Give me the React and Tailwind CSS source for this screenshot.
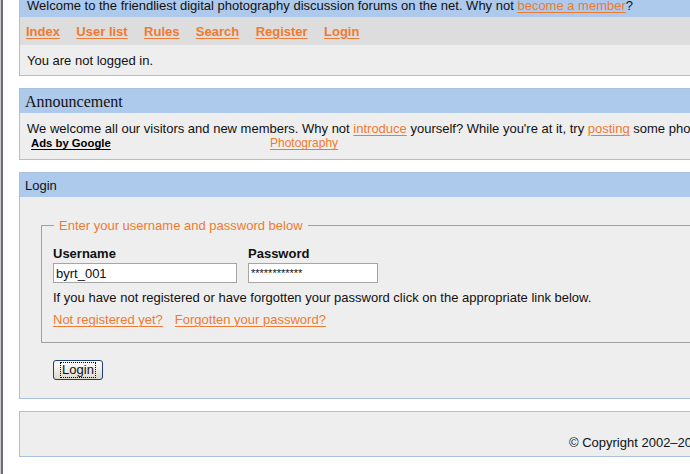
import React from "react";

const link = "text-[#f07a30] underline underline-offset-2 decoration-1";

export default function App() {
  return (
    <div className="flex w-[690px] h-[474px] overflow-hidden bg-white text-[13px] leading-[15px] text-[#111] font-['Liberation_Sans',Arial,sans-serif]">
      <div className="w-[3px] shrink-0 border-l border-[#c9c9c9] bg-[#6d6d78]" />
      <div className="flex flex-col shrink-0 w-[780px] pl-4">
        {/* Top panel */}
        <section className="-mt-2 border border-[#a9c1de]">
          <div className="h-6 bg-[#adc9eb] pl-[7px] flex items-center whitespace-nowrap">
            Welcome to the friendliest digital photography discussion forums on the net. Why not&nbsp;
            <a className={link}>become a member</a>?
          </div>
          <nav className="h-7 bg-[#dddddd] pl-[6px] flex items-center gap-[16.4px] font-bold text-[13px]">
            <a className={link}>Index</a>
            <a className={link}>User list</a>
            <a className={link}>Rules</a>
            <a className={link}>Search</a>
            <a className={link}>Register</a>
            <a className={link}>Login</a>
          </nav>
          <div className="h-[30px] bg-[#eeeeee] pl-[7px] flex items-center">You are not logged in.</div>
        </section>

        {/* Announcement */}
        <section className="mt-3 border border-[#a9c1de]">
          <div className="h-6 bg-[#adc9eb] pl-[5px] flex items-center font-['Liberation_Serif','Times_New_Roman',serif] text-[16px]">
            Announcement
          </div>
          <div className="bg-[#eeeeee] pl-[7px] pt-2 pb-2 whitespace-nowrap">
            <div>
              We welcome all our visitors and new members. Why not <a className={link}>introduce</a> yourself? While
              you're at it, try <a className={link}>posting</a> some photos of your own.
            </div>
            <div className="flex">
              <a className="ml-1 w-[239px] font-bold text-[11.3px] text-black underline underline-offset-2">Ads by Google</a>
              <a className={link + " text-[12px]"}>Photography</a>
            </div>
          </div>
        </section>

        {/* Login */}
        <section className="mt-3 border border-[#a9c1de]">
          <div className="h-6 bg-[#adc9eb] pl-[5px] flex items-center">Login</div>
          <div className="bg-[#eeeeee] pt-[21px] pb-[18px]">
            <fieldset className="ml-[21px] border border-[#a0a0a0] pl-[11px] pb-[15px]">
              <legend className="ml-px px-[5px] text-[#f07a30]">Enter your username and password below</legend>
              <div className="flex gap-[11px] mt-[13px]">
                <label className="flex flex-col">
                  <span className="font-bold">Username</span>
                  <input
                    readOnly
                    value="byrt_001"
                    className="mt-[2px] w-[184px] h-5 bg-white border border-[#a5a5a5] px-[2px] text-[13px] outline-none"
                  />
                </label>
                <label className="flex flex-col">
                  <span className="font-bold">Password</span>
                  <input
                    readOnly
                    value="************"
                    className="mt-[2px] w-[130px] h-5 bg-white border border-[#a5a5a5] px-[2px] text-[11px] outline-none"
                  />
                </label>
              </div>
              <p className="mt-[7px]">
                If you have not registered or have forgotten your password click on the appropriate link below.
              </p>
              <p className="mt-[7px] flex gap-3">
                <a className={link}>Not registered yet?</a>
                <a className={link}>Forgotten your password?</a>
              </p>
            </fieldset>
            <button className="ml-[33px] mt-[17px] w-[50px] h-5 flex items-center justify-center rounded-[3px] border border-[#1c3f78] bg-gradient-to-b from-white to-[#dcd9cd] text-[13px]">
              <span className="border border-dotted border-black px-px leading-[14px]">Login</span>
            </button>
          </div>
        </section>

        {/* Footer */}
        <section className="mt-3 border border-[#a9c1de]">
          <div className="h-[44px] bg-[#eeeeee] pt-[23px] pl-[549px] whitespace-nowrap">
            © Copyright 2002–2009 Digital Photography Forums
          </div>
        </section>
      </div>
    </div>
  );
}
